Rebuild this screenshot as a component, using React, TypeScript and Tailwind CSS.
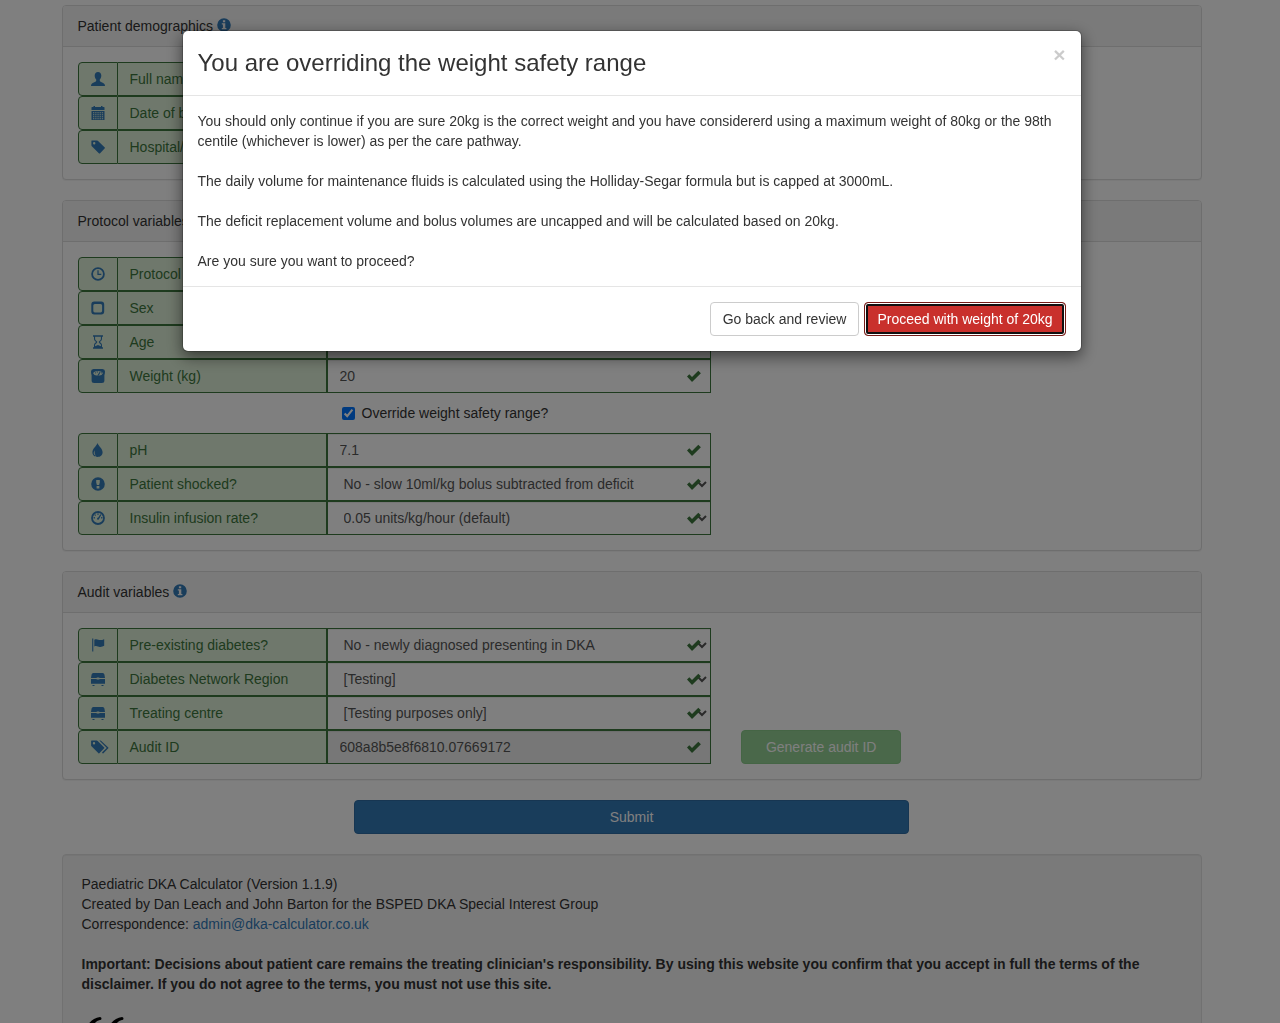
import { useState } from "react";
import type { ReactNode } from "react";

const icons: Record<string, ReactNode> = {
  user: (
    <path d="M7 0C4.900 0 3.700 1.500 3.700 3.600c0 1.700.6 3.100 1.500 4v1.300C4.900 9.900 1.200 10.600.400 12.300.100 12.900 0 13.500 0 14h14c0-.5-.1-1.100-.4-1.700-.8-1.700-4.500-2.400-4.800-3.400V7.600c.9-.9 1.500-2.300 1.500-4C10.300 1.500 9.100 0 7 0z" />
  ),
  calendar: (
    <path
      fillRule="evenodd"
      d="M2.500 0h1.500v1h6V0h1.500v1H13q.5 0 .5.500V4H.5V1.500Q.5 1 1 1h1.500zM.5 5h13v9H.5zM2 6.200v1h1.300v-1zm2.200 0v1h1.300v-1zm2.200 0v1h1.300v-1zm2.200 0v1h1.300v-1zm2.200 0v1h1.300v-1zM2 8.200v1h1.300v-1zm2.200 0v1h1.300v-1zm2.200 0v1h1.300v-1zm2.200 0v1h1.300v-1zm2.200 0v1h1.300v-1zM2 10.200v1h1.300v-1zm2.200 0v1h1.300v-1zm2.200 0v1h1.300v-1zm2.200 0v1h1.300v-1zm2.200 0v1h1.300v-1zM2 12.200v1h1.300v-1zm2.200 0v1h1.300v-1zm2.200 0v1h1.300v-1zm2.200 0v1h1.300v-1zm2.200 0v1h1.300v-1z"
    />
  ),
  tag: (
    <path
      fillRule="evenodd"
      d="M.8.400h5.100q.5 0 .9.400l7 6.700q.4.400 0 .8L8.900 13.400q-.4.400-.8 0L.8 6.200q-.4-.4-.4-.9V.8q0-.4.4-.4zM3.200 2a1.200 1.200 0 1 0 0 2.400 1.200 1.200 0 0 0 0-2.400z"
    />
  ),
  tags: (
    <>
      <path
        fillRule="evenodd"
        d="M.5.500h5.300q.5 0 .9.400l6.500 6.500q.4.400 0 .8l-4.900 5q-.4.400-.8 0L.5 6.300q-.4-.4-.4-.9V.900q0-.4.400-.4zM3 2a1.200 1.200 0 1 0 0 2.400A1.200 1.200 0 0 0 3 2z"
      />
      <path d="M8.300.500h1.100q.5 0 .9.400l7 6.500q.4.400 0 .8l-4.900 5q-.4.400-.8 0l-.6-.6 4.400-4.400q.4-.4 0-.8z" />
    </>
  ),
  time: (
    <path
      fillRule="evenodd"
      d="M7 .2a6.800 6.800 0 1 1 0 13.600A6.800 6.800 0 0 1 7 .2zm0 1.800a5 5 0 1 0 0 10A5 5 0 0 0 7 2zM6.400 3.300h1.200v3.400h2.700v1.200H6.400z"
    />
  ),
  unchecked: (
    <path
      fillRule="evenodd"
      d="M3.300.5h6.900q3 0 3 3v7q0 3-3 3H3.300q-3 0-3-3v-7q0-3 3-3zm.5 2.500q-1.500 0-1.500 1.500v5.300q0 1.700 1.500 1.700h5.800q1.500 0 1.500-1.700V4.500Q11.100 3 9.600 3z"
    />
  ),
  hourglass: (
    <path
      fillRule="evenodd"
      d="M2 .2h10v1.500h-1v2.200c0 1.500-1.300 2.300-2.300 3.100 1 .8 2.300 1.600 2.300 3.100v2.200h1v1.500H2v-1.500h1v-2.200C3 8.600 4.300 7.800 5.300 7 4.300 6.200 3 5.400 3 3.900V1.700H2zm2.100 1.500V4c0 1.300 1.500 1.600 2 2.600q.2.400 0 .8c-.5 1-2 1.300-2 2.600v1.300l2.900-1.400 2.900 1.400V10c0-1.300-1.500-1.600-2-2.600q-.2-.4 0-.8c.5-1 2-1.300 2-2.600V1.700z"
    />
  ),
  scale: (
    <>
      <path
        fillRule="evenodd"
        d="M2.500 0h9Q14 .3 14 2.500q0 2-.6 3.700v5.300q0 2.500-2.500 2.500H3.100Q.6 14 .6 11.500V6.200Q0 4.500 0 2.500 0 .3 2.500 0zM2 3.900q1.200 2.500 3.500 2.500h3Q10.800 6.400 12 3.900 10.500 1.900 7 1.900T2 3.900z"
      />
      <path d="M8.900 2.600 6.300 6.600h1.500l1.800-3.700zM5.900 2.600h1v1h-1zM3.900 3.700l.8-.5.5.8-.8.500zM9.900 3.700l.8-.4.500.8-.8.400z" />
    </>
  ),
  tint: (
    <path
      fillRule="evenodd"
      d="M6.500 0C7.600 3.200 11.600 5.700 11.600 9.300c0 2.900-2.200 4.700-5.100 4.700s-5.100-1.800-5.100-4.700C1.400 5.700 5.400 3.200 6.500 0zM4 7.200c-2.100 2.500-1.400 4.500 1 5.200-1.600-1.300-1.700-2.900-1-5.200z"
    />
  ),
  exclamation: (
    <path
      fillRule="evenodd"
      d="M7 .2a6.800 6.800 0 1 1 0 13.600A6.800 6.800 0 0 1 7 .2zM5.200 3v2.500L5.900 8h2.200l.7-2.500V3zm.4 6v2.400h2.800V9z"
    />
  ),
  dashboard: (
    <>
      <path
        fillRule="evenodd"
        d="M7 .1a6.900 6.900 0 1 1 0 13.800A6.900 6.900 0 0 1 7 .1zm0 1.800a5.100 5.100 0 1 0 0 10.200A5.100 5.100 0 0 0 7 1.900z"
      />
      <path d="M6.300 2.500h1.400v1.300H6.300zM3.600 3.600l1.200-.2.100 1.300-1.200.1zM2.600 6.100h1.300v1.300H2.600zm7.500 0h1.300v1.300h-1.300zM9.300 3.200l1.100.6-2.200 3.900Q7.900 9 6.800 8.800q-1.100-.4-.7-1.600.4-.8 1.200-.7z" />
    </>
  ),
  flag: (
    <path d="M1.200.500h1.100V13.400H1.200zM3.300 1.700c2.600-1.400 4.300.5 6 .4 1.600 0 2.600-.4 3.900-.9v6.600c-1.300.8-2.700 1.200-4.300 1.100-1.900-.2-3.400-1.700-5.600-.5z" />
  ),
  bed: (
    <path d="M2.300 1h9.400q1.500 0 1.700 1.500L14 6H8.300V5.400H5.700V6H0l.6-3.500Q.8 1 2.300 1zM0 7h5.500q.1.600.6.600h1.800q.5 0 .6-.6H14v4.800H0zM1.500 13h2v.9h-2zm9 0h2v.9h-2z" />
  ),
  info: (
    <path
      fillRule="evenodd"
      d="M7 .2a6.800 6.800 0 1 1 0 13.600A6.800 6.800 0 0 1 7 .2zM5.900 2.300v1.900h2.300V2.300zM4.800 5.300v1.100h1.100v3.700H4.800v1.200h4.600v-1.200H8.300V5.300z"
    />
  ),
  ok: <path d="M0 7.600 2.300 5.300 5 8 11.300 1.800 13.900 4.200 5.300 12.700H4.800z" />,
};

function Icon({ name, className = "text-[#337ab7]" }: { name: string; className?: string }) {
  return (
    <svg
      viewBox="0 0 14 14"
      aria-hidden="true"
      className={`inline-block size-3.5 shrink-0 overflow-visible fill-current ${className}`}
    >
      {icons[name]}
    </svg>
  );
}

interface FieldProps {
  id: string;
  icon: string;
  label: string;
  value: string;
  select?: boolean;
  readOnly?: boolean;
  action?: ReactNode;
}

const controlClass =
  "h-[34px] w-full border border-[#3c763d] text-[14px] leading-5 text-[#555] shadow-[inset_0_1px_1px_rgba(0,0,0,0.075)] px-3 py-1.5";

function Field({ id, icon, label, value, select, readOnly, action }: FieldProps) {
  return (
    <div className="-mx-[15px] flex">
      <div className="w-7/12 px-[15px]">
        <div className="flex h-[34px]">
          <span className="flex w-10 shrink-0 items-center rounded-l border border-[#3c763d] bg-[#dff0d8] pl-3">
            <Icon name={icon} />
          </span>
          <label
            htmlFor={id}
            className="flex w-[209px] shrink-0 items-center border-y border-r border-[#3c763d] bg-[#dff0d8] px-3 whitespace-nowrap text-[#3c763d]"
          >
            {label}
          </label>
          <div className="relative min-w-0 flex-1">
            {select ? (
              <select id={id} className={`${controlClass} bg-white`}>
                <option>{value}</option>
              </select>
            ) : (
              <input
                id={id}
                type="text"
                defaultValue={value}
                readOnly={readOnly}
                className={`${controlClass} ${readOnly ? "bg-[#eee]" : "bg-white"}`}
              />
            )}
            <span className="pointer-events-none absolute inset-y-0 right-0 flex w-[34px] items-center justify-center">
              <Icon name="ok" className="text-[#3c763d]" />
            </span>
          </div>
        </div>
      </div>
      {action}
    </div>
  );
}

function Panel({ title, children }: { title: string; children: ReactNode }) {
  return (
    <section className="mb-5 rounded border border-[#ddd] bg-white shadow-[0_1px_1px_rgba(0,0,0,0.05)]">
      <h2 className="flex items-center gap-1 rounded-t-[3px] border-b border-[#ddd] bg-[#f5f5f5] px-[15px] py-2.5">
        {title}
        <a href="#info" aria-label={`About ${title}`} className="-mt-0.5 flex">
          <Icon name="info" />
        </a>
      </h2>
      <div className="p-[15px]">{children}</div>
    </section>
  );
}

function WeightDialog() {
  return (
    <div className="fixed inset-0 bg-black/50 pt-[30px] pr-[17px]">
      <div
        role="dialog"
        aria-modal="true"
        aria-labelledby="dialog-title"
        className="mx-auto max-w-[900px] rounded-md border border-black/20 bg-white bg-clip-padding shadow-[0_5px_15px_rgba(0,0,0,0.5)]"
      >
        <div className="flex items-start justify-between border-b border-[#e5e5e5] p-[15px]">
          <h4 id="dialog-title" className="text-[24px] leading-[34px]">
            You are overriding the weight safety range
          </h4>
          <button
            type="button"
            aria-label="Close"
            className="-mt-0.5 text-[21px] leading-[21px] font-bold text-black opacity-20"
          >
            ×
          </button>
        </div>
        <div className="flex flex-col gap-5 p-[15px]">
          <p>
            You should only continue if you are sure 20kg is the correct weight and you have considererd using a
            maximum weight of 80kg or the 98th centile (whichever is lower) as per the care pathway.
          </p>
          <p>
            The daily volume for maintenance fluids is calculated using the Holliday-Segar formula but is capped at
            3000mL.
          </p>
          <p>The deficit replacement volume and bolus volumes are uncapped and will be calculated based on 20kg.</p>
          <p>Are you sure you want to proceed?</p>
        </div>
        <div className="flex justify-end gap-[5px] border-t border-[#e5e5e5] p-[15px]">
          <button type="button" className="rounded border border-[#ccc] bg-white px-3 py-1.5">
            Go back and review
          </button>
          <button
            type="button"
            className="rounded border border-[#761c19] bg-[#c9302c] px-3 py-1.5 text-white shadow-[inset_0_0_0_1px_#fff,inset_0_0_0_3px_#101010]"
          >
            Proceed with weight of 20kg
          </button>
        </div>
      </div>
    </div>
  );
}

export default function App() {
  const [override, setOverride] = useState(true);
  return (
    <div className="h-screen overflow-hidden bg-white pt-[5px] pr-[17px] font-['Liberation_Sans',Arial,sans-serif] text-[14px] leading-5 text-[#333]">
      <main className="mx-auto max-w-[1140px]">
        <Panel title="Patient demographics">
          <Field id="name" icon="user" label="Full name" value="" />
          <Field id="dob" icon="calendar" label="Date of birth" value="" />
          <Field id="hospital" icon="tag" label="Hospital/NHS number" value="" />
        </Panel>

        <Panel title="Protocol variables">
          <Field id="start" icon="time" label="Protocol start datetime" value="" />
          <Field id="sex" icon="unchecked" label="Sex" value="" select />
          <Field id="age" icon="hourglass" label="Age" value="" readOnly />
          <Field id="weight" icon="scale" label="Weight (kg)" value="20" />
          <div className="flex h-10 items-center pl-[264px]">
            <label className="flex items-center gap-[7px]">
              <input
                type="checkbox"
                checked={override}
                onChange={(e) => setOverride(e.target.checked)}
                className="size-[13px]"
              />
              Override weight safety range?
            </label>
          </div>
          <Field id="ph" icon="tint" label="pH" value="7.1" />
          <Field
            id="shocked"
            icon="exclamation"
            label="Patient shocked?"
            value="No - slow 10ml/kg bolus subtracted from deficit"
            select
          />
          <Field
            id="insulin"
            icon="dashboard"
            label="Insulin infusion rate?"
            value="0.05 units/kg/hour (default)"
            select
          />
        </Panel>

        <Panel title="Audit variables">
          <Field
            id="diabetes"
            icon="flag"
            label="Pre-existing diabetes?"
            value="No - newly diagnosed presenting in DKA"
            select
          />
          <Field id="region" icon="bed" label="Diabetes Network Region" value="[Testing]" select />
          <Field id="centre" icon="bed" label="Treating centre" value="[Testing purposes only]" select />
          <Field
            id="audit"
            icon="tags"
            label="Audit ID"
            value="608a8b5e8f6810.07669172"
            readOnly
            action={
              <div className="w-2/12 px-[15px]">
                <button
                  type="button"
                  disabled
                  className="w-full rounded border border-[#4cae4c] bg-[#5cb85c] px-3 py-1.5 text-white opacity-65"
                >
                  Generate audit ID
                </button>
              </div>
            }
          />
        </Panel>

        <div className="-mx-[15px] mb-5 flex justify-center">
          <div className="w-1/2 px-[15px]">
            <button
              type="submit"
              className="w-full rounded border border-[#2e6da4] bg-[#337ab7] px-3 py-1.5 text-white"
            >
              Submit
            </button>
          </div>
        </div>

        <footer className="rounded border border-[#e3e3e3] bg-[#f5f5f5] p-[19px] shadow-[inset_0_1px_1px_rgba(0,0,0,0.05)]">
          <p>Paediatric DKA Calculator (Version 1.1.9)</p>
          <p>Created by Dan Leach and John Barton for the BSPED DKA Special Interest Group</p>
          <p>
            Correspondence:{" "}
            <a href="mailto:admin@dka-calculator.co.uk" className="text-[#337ab7]">
              admin@dka-calculator.co.uk
            </a>
          </p>
          <p className="mt-5 font-bold">
            Important: Decisions about patient care remains the treating clinician's responsibility. By using this
            website you confirm that you accept in full the terms of the disclaimer. If you do not agree to the terms,
            you must not use this site.
          </p>
          <svg viewBox="0 0 44 36" aria-hidden="true" className="mt-[22px] h-9 w-11 fill-black">
            <path d="M18 1q1.500 0 1.500 1.500T18 4C13 5 10 10 10 16c6-1 10 3 10 9a9 9 0 0 1-18 0C2 12 8 2 18 1z" />
            <path d="M40 1q1.500 0 1.500 1.500T40 4C35 5 32 10 32 16c6-1 10 3 10 9a9 9 0 0 1-18 0C24 12 30 2 40 1z" />
          </svg>
        </footer>
      </main>
      <WeightDialog />
    </div>
  );
}
